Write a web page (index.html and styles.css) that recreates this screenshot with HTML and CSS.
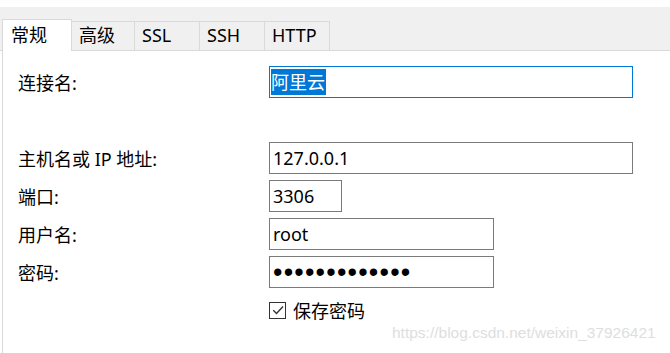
FILE: index.html
```html
<!DOCTYPE html>
<html lang="zh-CN">
<head>
    <meta charset="UTF-8">
    <title>连接属性</title>
    <link rel="stylesheet" href="styles.css">
</head>
<body>
    <div class="window">
        <!-- tab strip -->
        <div class="tabbar">
            <div class="tab active">常规</div>
            <div class="tab">高级</div>
            <div class="tab">SSL</div>
            <div class="tab">SSH</div>
            <div class="tab">HTTP</div>
        </div>

        <!-- general page -->
        <div class="panel">
            <div class="form">
                <div class="label">连接名:</div>
                <div class="field field-wide focused"><span class="selected">阿里云</span></div>

                <div class="spacer"></div>
                <div class="spacer"></div>

                <div class="label">主机名或 IP 地址:</div>
                <div class="field field-wide">127.0.0.1</div>

                <div class="label">端口:</div>
                <div class="field field-port">3306</div>

                <div class="label">用户名:</div>
                <div class="field field-mid">root</div>

                <div class="label">密码:</div>
                <div class="field field-mid"><span class="dots">•••••••••••••</span></div>

                <div class="spacer"></div>
                <label class="check">
                    <span class="box">
                        <svg width="14" height="14" viewBox="0 0 14 14">
                            <path d="M2.3 7.2 L5.5 10.4 L12 3.6" fill="none" stroke="#333" stroke-width="1.4"/>
                        </svg>
                    </span>
                    保存密码
                </label>
            </div>
            <div class="watermark">https://blog.csdn.net/weixin_37926421</div>
        </div>
    </div>
</body>
</html>
```

FILE: styles.css
```css
body {
    margin: 0;
    background: white;
    font-family: "Noto Sans", "Noto Sans CJK SC", sans-serif;
    font-size: 18px;
    color: #000;
}
.window {
    padding-top: 7px;
    height: 346px;
    overflow: hidden;
}
.tabbar {
    display: flex;
    align-items: flex-end;
    height: 43px;
    padding-left: 2px;
    background: #f0f0f0;
    border-bottom: 1px solid #d9d9d9;
}
.tab {
    box-sizing: border-box;
    width: 66px;
    height: 29px;
    padding-left: 7px;
    margin-left: -1px;
    line-height: 27px;
    background: #f0f0f0;
    border: 1px solid #d9d9d9;
    border-bottom: none;
    white-space: nowrap;
}
.tab.active {
    width: 70px;
    height: 32px;
    margin-left: 0;
    margin-bottom: -1px;
    padding-left: 8px;
    line-height: 30px;
    background: white;
    position: relative;
    z-index: 1;
}
.tab.active + .tab {
    width: 64px;
}
.panel {
    position: relative;
    height: 100%;
    margin-left: 2px;
    padding: 15px 0 0 15px;
    border-left: 1px solid #d9d9d9;
}
.form {
    display: grid;
    grid-template-columns: 251px auto;
    grid-auto-rows: 32px;
    row-gap: 6px;
}
.label {
    display: flex;
    align-items: center;
    white-space: nowrap;
}
.field {
    box-sizing: border-box;
    display: flex;
    align-items: center;
    height: 32px;
    padding-left: 3px;
    border: 1px solid #7a7a7a;
    white-space: nowrap;
    overflow: hidden;
}
.field.focused {
    border-color: #0078d7;
    padding-left: 1px;
}
.field-wide {
    width: 364px;
}
.field-port {
    width: 73px;
}
.field-mid {
    width: 225px;
}
.selected {
    background: #0078d7;
    color: white;
    line-height: 26px;
    padding-right: 1px;
}
.dots {
    font-family: "Liberation Sans", sans-serif;
    font-size: 27px;
    letter-spacing: 1.2px;
    line-height: 26px;
}
.check {
    display: flex;
    align-items: center;
    gap: 7px;
}
.box {
    box-sizing: border-box;
    width: 17px;
    height: 17px;
    border: 1px solid #333;
    display: flex;
    align-items: center;
    justify-content: center;
}
.box svg {
    display: block;
}
.watermark {
    position: absolute;
    left: 389px;
    top: 273px;
    font-family: "Liberation Sans", sans-serif;
    font-size: 15.5px;
    color: #dedede;
    white-space: nowrap;
}
```
